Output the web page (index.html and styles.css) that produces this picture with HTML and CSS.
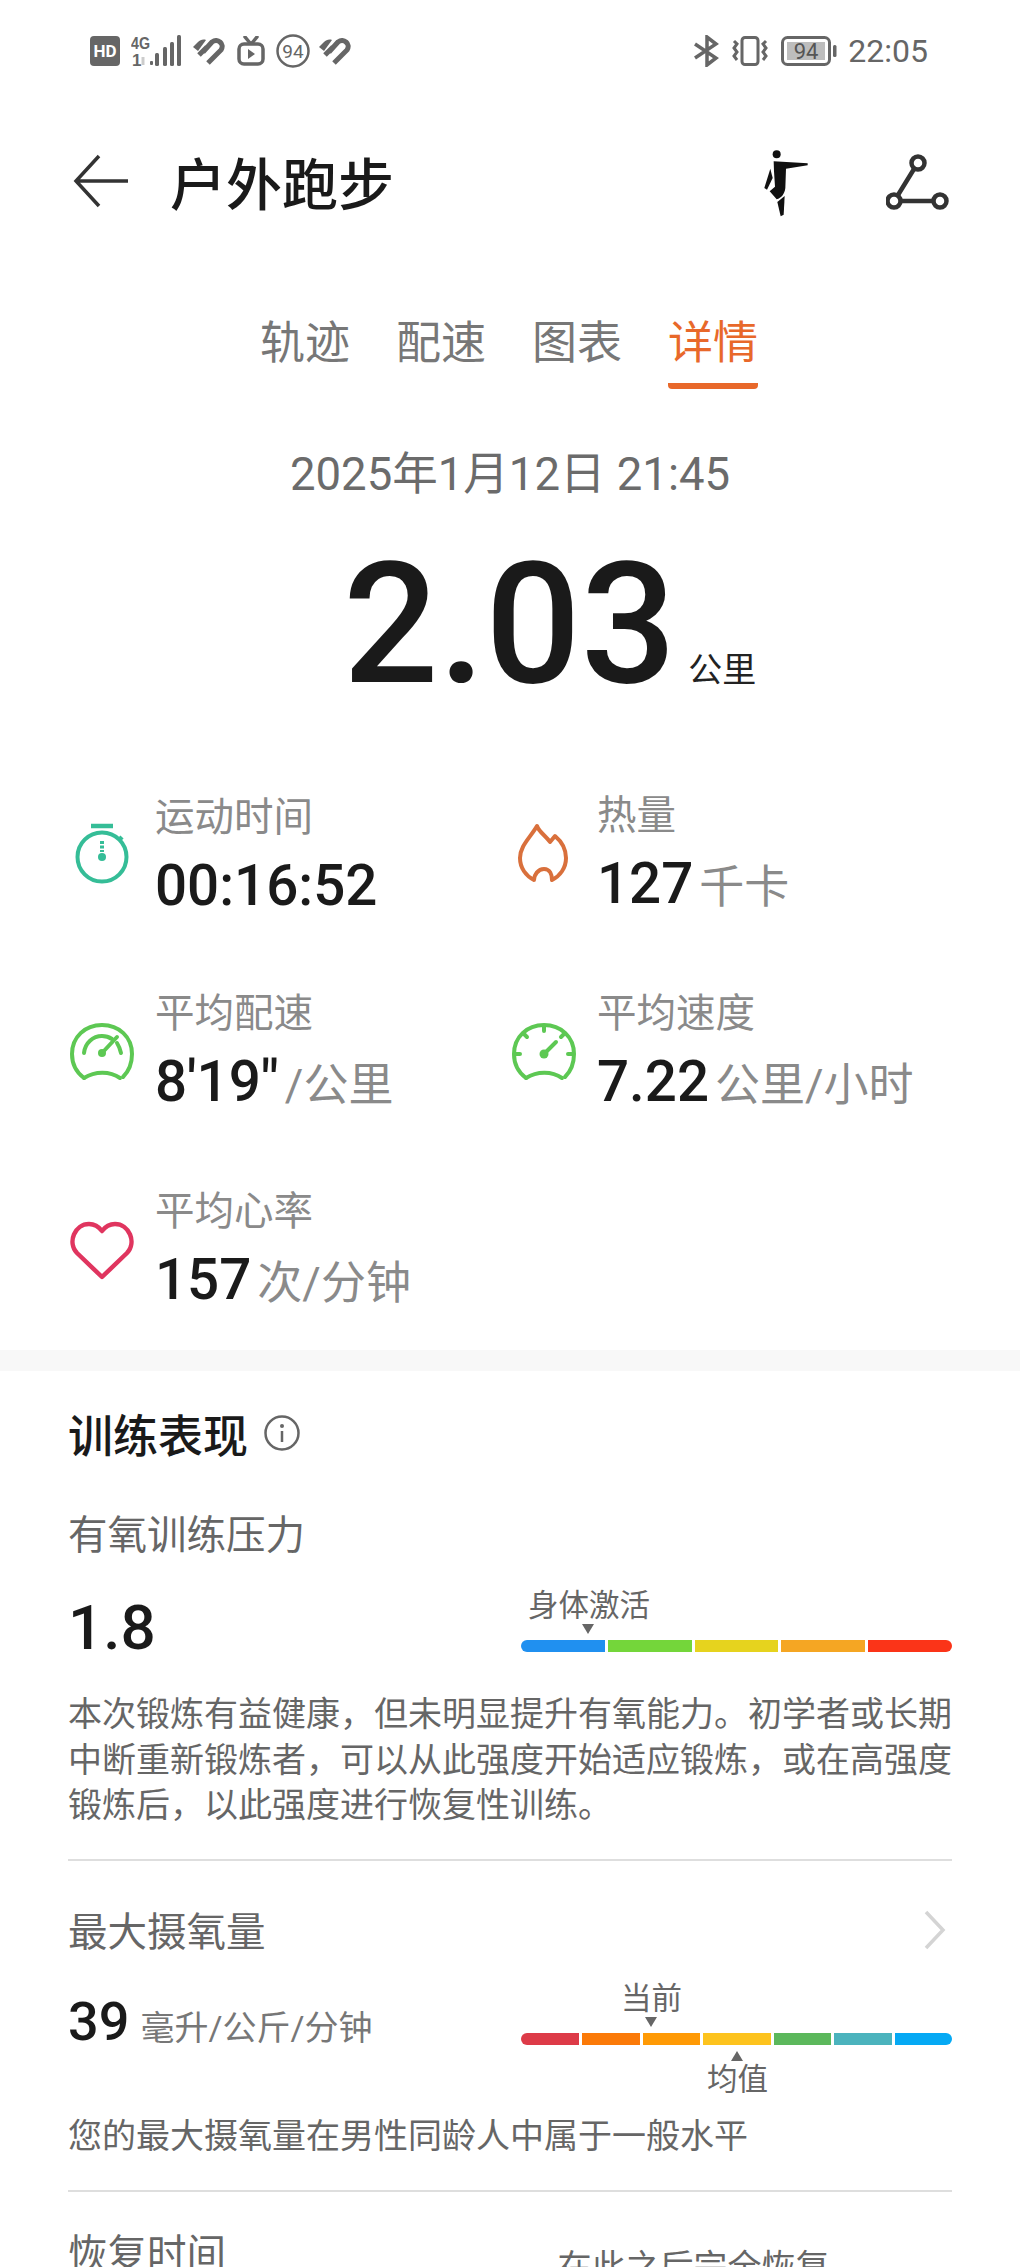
FILE: index.html
```html
<!DOCTYPE html>
<html lang="zh-CN">
<head>
  <meta charset="UTF-8" />
  <meta name="viewport" content="width=device-width, initial-scale=1.0" />
  <title>户外跑步</title>
  <link rel="stylesheet" href="styles.css">
</head>
<body>
  <div class="status-bar">
    <div class="status-left">
      <svg class="ic-hd" width="30" height="30" viewBox="0 0 30 30"><rect width="30" height="30" rx="4" fill="#666"/><text x="15" y="21" class="svg-hd">HD</text></svg>
      <svg class="ic-signal" width="52" height="32" viewBox="0 0 52 32">
        <text x="0" y="14" class="svg-tiny" textLength="19" lengthAdjust="spacingAndGlyphs">4G</text>
        <text x="1" y="31" class="svg-tiny">1</text>
        <path d="M12 22v8" stroke="#ccc" stroke-width="3"/>
        <g fill="#666"><rect x="19" y="26" width="3" height="4" rx="1"/><rect x="24" y="18" width="4" height="13" rx="1.500"/><rect x="32" y="12" width="4" height="19" rx="1.500"/><rect x="39" y="7" width="4" height="24" rx="1.500"/><rect x="46" y="0" width="4" height="31" rx="1.500"/></g>
      </svg>
      <svg class="ic-heart" width="32" height="27" viewBox="0 0 32 27"><path d="M15 25 28 12C32 6 25 0 19 4L10 14M6 17l8-8" fill="none" stroke="#666" stroke-width="5"/><path d="M0 9l5-5c2-2 5-3 8-2L5 13z" fill="#666"/></svg>
      <svg class="ic-tv" width="28" height="30" viewBox="0 0 28 30"><path d="M8 1l5 6M20 1l-5 6" stroke="#666" stroke-width="3.500" stroke-linecap="round"/><rect x="2" y="8" width="24" height="20" rx="5" fill="none" stroke="#666" stroke-width="3.500"/><path d="M11 13l7 5-7 5z" fill="#666"/></svg>
      <svg class="ic-circle" width="34" height="34" viewBox="0 0 34 34"><circle cx="17" cy="17" r="15.500" fill="none" stroke="#666" stroke-width="2.500"/><text x="17" y="23.500" class="svg-num">94</text></svg>
      <svg class="ic-heart" width="32" height="27" viewBox="0 0 32 27"><path d="M15 25 28 12C32 6 25 0 19 4L10 14M6 17l8-8" fill="none" stroke="#666" stroke-width="5"/><path d="M0 9l5-5c2-2 5-3 8-2L5 13z" fill="#666"/></svg>
    </div>
    <div class="status-right">
      <svg width="28" height="32" viewBox="0 0 28 32"><path d="M2 9l21 14-9 7V2l9 7L2 23" fill="none" stroke="#666" stroke-width="3.500"/></svg>
      <svg class="ic-vibrate" width="40" height="30" viewBox="0 0 40 30"><rect x="12" y="1.500" width="16" height="27" rx="3" fill="none" stroke="#666" stroke-width="3"/><path d="M4 5l3 3-3 4 3 4-3 4 3 4M36 5l-3 3 3 4-3 4 3 4-3 4" fill="none" stroke="#666" stroke-width="3"/></svg>
      <svg class="ic-batt" width="56" height="30" viewBox="0 0 56 30"><rect x="1.500" y="1.500" width="47" height="27" rx="5" fill="none" stroke="#666" stroke-width="3"/><rect x="6" y="6" width="38" height="18" fill="#bdbdbd"/><rect x="52" y="9" width="3.500" height="12" rx="1.500" fill="#666"/><text x="25" y="22.500" class="svg-batt">94</text></svg>
      <span class="status-time">22:05</span>
    </div>
  </div>

  <div class="app-bar">
    <svg class="back" width="58" height="54" viewBox="0 0 58 54"><path d="M28 2 5 27l23 25M5 27h52" fill="none" stroke="#333" stroke-width="3.500"/></svg>
    <h1 class="title">户外跑步</h1>
    <svg class="runner" width="50" height="70" viewBox="60 50 150 210">
      <circle cx="107" cy="69" r="12" fill="#111"/>
      <path d="M98 90 200 96v6l-65 10-2 58c-2 18-12 30-26 34L86 180l16-14-3-46z" fill="#111"/>
      <path d="M88 112 70 170l8 5 17-35z" fill="#111"/>
      <path d="M109 212l22-18-3 56-9 5z" fill="#111"/>
    </svg>
    <svg class="route" width="64" height="56" viewBox="0 0 64 56"><g fill="none" stroke="#333" stroke-width="4.500"><circle cx="32" cy="9" r="6.500"/><circle cx="8" cy="47" r="6.500"/><circle cx="54" cy="47" r="6.500"/><path d="M28 15 12 41M15 47h32"/></g></svg>
  </div>

  <div class="tabs">
    <div class="tab">轨迹</div>
    <div class="tab">配速</div>
    <div class="tab">图表</div>
    <div class="tab active">详情</div>
  </div>

  <div class="date">2025年1月12日 21:45</div>
  <div class="hero"><span class="hero-num">2.03</span><span class="hero-unit">公里</span></div>

  <div class="metrics">
    <div class="metric">
      <svg class="m-icon" width="68" height="68" viewBox="0 0 68 68"><g fill="none" stroke="#35bd97"><path d="M23 6h22" stroke-width="4.500"/><circle cx="34" cy="37" r="24.500" stroke-width="4"/><path d="M34 21v11" stroke-width="4" stroke-dasharray="3 1.500"/><path d="M51 20l3-3" stroke-width="4.500"/></g><circle cx="34" cy="37" r="4" fill="#35bd97"/></svg>
      <div>
        <div class="m-label">运动时间</div>
        <div class="m-value">00:16:52</div>
      </div>
    </div>
    <div class="metric">
      <svg class="m-icon" width="68" height="68" viewBox="0 0 68 68"><path d="M24 60c-8-4-14-12-14-22 0-12 10-20 17-32 2 6 9 10 13 16l5-6c6 5 11 13 11 22 0 10-6 18-14 22 0-5-2-11-8-11s-10 6-10 11z" fill="none" stroke="#d9703c" stroke-width="4" stroke-linejoin="round"/></svg>
      <div>
        <div class="m-label">热量</div>
        <div class="m-value">127<span class="m-unit">千卡</span></div>
      </div>
    </div>
    <div class="metric">
      <svg class="m-icon" width="68" height="68" viewBox="0 0 68 68"><g fill="none" stroke="#5dc853" stroke-width="4" stroke-linecap="round"><path d="M16 60C8 54 4 45 4 36 4 19 17 7 34 7s30 12 30 29c0 9-3 17-9 23"/><path d="M16 60c11-7 26-7 36 0"/><path d="M16 35c1-10 9-17 18-17 4 0 7 1 10 3M49 25c2 3 3 6 4 10"/><path d="M34 35l15-16"/></g><circle cx="34" cy="35" r="4" fill="#5dc853"/></svg>
      <div>
        <div class="m-label">平均配速</div>
        <div class="m-value">8'19"<span class="m-unit">/公里</span></div>
      </div>
    </div>
    <div class="metric">
      <svg class="m-icon" width="68" height="68" viewBox="0 0 68 68"><g fill="none" stroke="#5dc853" stroke-width="4" stroke-linecap="round"><path d="M16 60C8 54 4 45 4 36 4 19 17 7 34 7s30 12 30 29c0 9-3 17-9 23"/><path d="M16 60c11-7 26-7 36 0"/><path d="M34 9v4M14 16l3 3M54 16l-3 3M6 36h4M58 36h4M34 36l12-12"/></g><circle cx="34" cy="36" r="4.500" fill="#5dc853"/></svg>
      <div>
        <div class="m-label">平均速度</div>
        <div class="m-value">7.22<span class="m-unit">公里/小时</span></div>
      </div>
    </div>
    <div class="metric">
      <svg class="m-icon" width="68" height="68" viewBox="0 0 68 68"><path d="M34 61 9 37C-1 26 7 8 21 8c6 0 10 3 13 7 3-4 7-7 13-7 14 0 22 18 12 29z" fill="none" stroke="#e0355f" stroke-width="4.500" stroke-linejoin="round"/></svg>
      <div>
        <div class="m-label">平均心率</div>
        <div class="m-value">157<span class="m-unit">次/分钟</span></div>
      </div>
    </div>
  </div>

  <div class="band"></div>

  <div class="section">
    <div class="section-head">
      <span class="section-title">训练表现</span>
      <svg width="38" height="38" viewBox="0 0 38 38"><circle cx="19" cy="19" r="16.500" fill="none" stroke="#666" stroke-width="2.500"/><circle cx="19" cy="12" r="2" fill="#666"/><path d="M19 17v11" stroke="#666" stroke-width="2.500"/></svg>
    </div>

    <div class="sub-title">有氧训练压力</div>
    <div class="row load-row">
      <div class="big-num">1.8</div>
      <div class="gauge">
        <div class="g-label load-label">身体激活</div>
        <div class="tri-down load-tri"></div>
        <div class="bar">
          <span style="flex:1;background:#2090f0"></span>
          <span style="flex:1;background:#74d63a"></span>
          <span style="flex:1;background:#e6d31e"></span>
          <span style="flex:1;background:#f5a623"></span>
          <span style="flex:1;background:#fb3418"></span>
        </div>
      </div>
    </div>
    <p class="para">本次锻炼有益健康，但未明显提升有氧能力。初学者或长期中断重新锻炼者，可以从此强度开始适应锻炼，或在高强度锻炼后，以此强度进行恢复性训练。</p>
    <div class="line line-a"></div>

    <div class="sub-row">
      <div class="sub-title flat">最大摄氧量</div>
      <svg class="chev" width="22" height="40" viewBox="0 0 22 40"><path d="M2 2l17 18L2 38" fill="none" stroke="#d4d4d4" stroke-width="3.500"/></svg>
    </div>
    <div class="row vo-row">
      <div class="vo-value"><span class="vo-num">39</span><span class="vo-unit">毫升/公斤/分钟</span></div>
      <div class="gauge">
        <div class="g-label now-label">当前</div>
        <div class="tri-down now-tri"></div>
        <div class="bar">
          <span style="flex:58;background:#dd3b48"></span>
          <span style="flex:57;background:#fb7a08"></span>
          <span style="flex:57;background:#ff9a05"></span>
          <span style="flex:67;background:#fdc31e"></span>
          <span style="flex:57;background:#5cb85c"></span>
          <span style="flex:57;background:#4bb3bd"></span>
          <span style="flex:57;background:#05a9f4"></span>
        </div>
        <div class="tri-up avg-tri"></div>
        <div class="g-label avg-label">均值</div>
      </div>
    </div>
    <p class="para vo-para">您的最大摄氧量在男性同龄人中属于一般水平</p>
    <div class="line line-b"></div>

    <div class="row rec-row">
      <div class="sub-title flat">恢复时间</div>
      <div class="rec-note">在此之后完全恢复</div>
    </div>
  </div>
</body>
</html>
```

FILE: styles.css
```css
* {
  box-sizing: border-box;
}
html, body {
  height: 2267px;
  overflow: hidden;
}
body {
  margin: 0;
  background: #fff;
  color: #1a1a1a;
  font-family: Roboto, "Noto Sans CJK SC", sans-serif;
}
svg {
  display: block;
  flex: none;
}
.svg-hd {
  font: 700 17px Roboto, sans-serif;
  fill: #fff;
  text-anchor: middle;
}
.svg-tiny {
  font: 700 17px "Liberation Sans", sans-serif;
  fill: #666;
}
.svg-num {
  font: 400 19px Roboto, sans-serif;
  fill: #666;
  text-anchor: middle;
}
.svg-batt {
  font: 400 22px Roboto, sans-serif;
  fill: #555;
  text-anchor: middle;
}

/* status bar */
.status-bar {
  height: 102px;
  padding: 0 92px 0 90px;
  display: flex;
  align-items: center;
  justify-content: space-between;
}
.status-left,
.status-right {
  display: flex;
  align-items: center;
}
.ic-signal { margin-left: 11px; }
.status-left .ic-heart { margin-left: 10px; }
.ic-tv { margin-left: 12px; }
.ic-circle { margin-left: 11px; }
.status-left .ic-circle + .ic-heart { margin-left: 9px; }
.ic-vibrate { margin-left: 9px; }
.ic-batt { margin-left: 11px; }
.status-time {
  margin-left: 11px;
  font-size: 32px;
  color: #666;
}

/* app bar */
.app-bar {
  height: 162px;
  padding: 0 70px 0 71px;
  display: flex;
  align-items: center;
}
.back { margin-top: -4px; }
.title {
  margin: -5px 0 0 41px;
  font-size: 56px;
  font-weight: 500;
  color: #1a1a1a;
}
.runner { margin-left: auto; }
.route { margin: -3px 0 0 75px; }

/* tabs */
.tabs {
  margin-top: 50px;
  padding-right: 2px;
  display: flex;
  justify-content: center;
  gap: 46px;
}
.tab {
  width: 90px;
  height: 75px;
  font-size: 45px;
  line-height: 60px;
  color: #777;
  text-align: center;
}
.tab.active {
  color: #e8682a;
  border-bottom: 6px solid #e8682a;
  border-radius: 0 0 4px 4px;
}

/* summary */
.date {
  margin-top: 56px;
  font-size: 45.5px;
  line-height: 60px;
  color: #6b6b6b;
  text-align: center;
}
.hero {
  margin-top: 35px;
  height: 170px;
  padding-left: 343px;
  display: flex;
  align-items: baseline;
}
.hero-num {
  font-size: 168px;
  line-height: 170px;
  font-weight: 500;
  color: #1a1a1a;
}
.hero-unit {
  margin: 0 0 -6px 12px;
  font-size: 34px;
  color: #222;
}

/* metrics */
.metrics {
  margin-top: 84px;
  padding-left: 68px;
  display: grid;
  grid-template-columns: 442px 1fr;
  grid-auto-rows: 126px;
  row-gap: 72px;
}
.metric {
  display: flex;
  align-items: center;
  gap: 19px;
}
.m-icon { margin-top: -6px; }
.m-label {
  font-size: 39.5px;
  line-height: 50px;
  color: #8a8a8a;
}
.m-value {
  margin-top: 8px;
  font-size: 56.5px;
  line-height: 70px;
  font-weight: 500;
  color: #1a1a1a;
  white-space: nowrap;
}
.m-unit {
  margin-left: 6px;
  font-size: 45px;
  font-weight: 400;
  color: #8a8a8a;
}
.band {
  margin-top: 34px;
  height: 21px;
  background: #f8f8f8;
}

/* training section */
.section {
  padding: 0 68px 0 68px;
}
.section-head {
  margin-top: 32px;
  height: 60px;
  display: flex;
  align-items: center;
  gap: 15px;
}
.section-title {
  font-size: 45px;
  font-weight: 500;
  color: #1a1a1a;
}
.sub-title {
  margin-top: 48px;
  font-size: 39.5px;
  line-height: 50px;
  color: #666;
}
.sub-title.flat {
  margin-top: 0;
}
.row {
  display: flex;
  justify-content: space-between;
  align-items: flex-start;
}
.load-row {
  margin-top: 27px;
  height: 80px;
}
.big-num {
  font-size: 62px;
  line-height: 80px;
  font-weight: 500;
}
.gauge {
  width: 431px;
  flex: none;
}
.g-label {
  height: 36px;
  font-size: 30.5px;
  line-height: 36px;
  color: #666;
}
.load-label { margin-left: 7px; }
.tri-down,
.tri-up {
  width: 0;
  height: 0;
  border-left: 6px solid transparent;
  border-right: 6px solid transparent;
}
.tri-down {
  border-top: 10px solid #666;
  margin-bottom: 6px;
}
.tri-up {
  border-bottom: 10px solid #666;
  margin-top: 6px;
}
.load-tri { margin-left: 61px; }
.bar {
  height: 12px;
  display: flex;
  gap: 3px;
  border-radius: 6px;
  overflow: hidden;
}
.para {
  margin: 24px 0 0;
  font-size: 34px;
  line-height: 45.5px;
  color: #666;
}
.line {
  height: 2px;
  background: #dedede;
}
.line-a { margin-top: 30px; }
.sub-row {
  margin-top: 47px;
  display: flex;
  align-items: center;
  justify-content: space-between;
  padding-right: 6px;
}
.chev { margin-top: -5px; }
.vo-row {
  margin-top: 23px;
}
.vo-value {
  margin-top: 6px;
  line-height: 70px;
  white-space: nowrap;
}
.vo-num {
  font-size: 54px;
  font-weight: 500;
}
.vo-unit {
  margin-left: 11px;
  font-size: 34px;
  color: #777;
}
.now-label { margin-left: 100px; }
.now-tri { margin-left: 124px; }
.avg-tri { margin-left: 210px; }
.avg-label { margin: 1px 0 0 186px; }
.vo-para {
  margin-top: 16px;
}
.line-b { margin-top: 31px; }
.rec-row {
  margin-top: 38px;
}
.rec-note {
  width: 431px;
  flex: none;
  margin-top: 14px;
  padding-right: 86px;
  font-size: 34px;
  line-height: 46px;
  color: #666;
  text-align: center;
}
```
